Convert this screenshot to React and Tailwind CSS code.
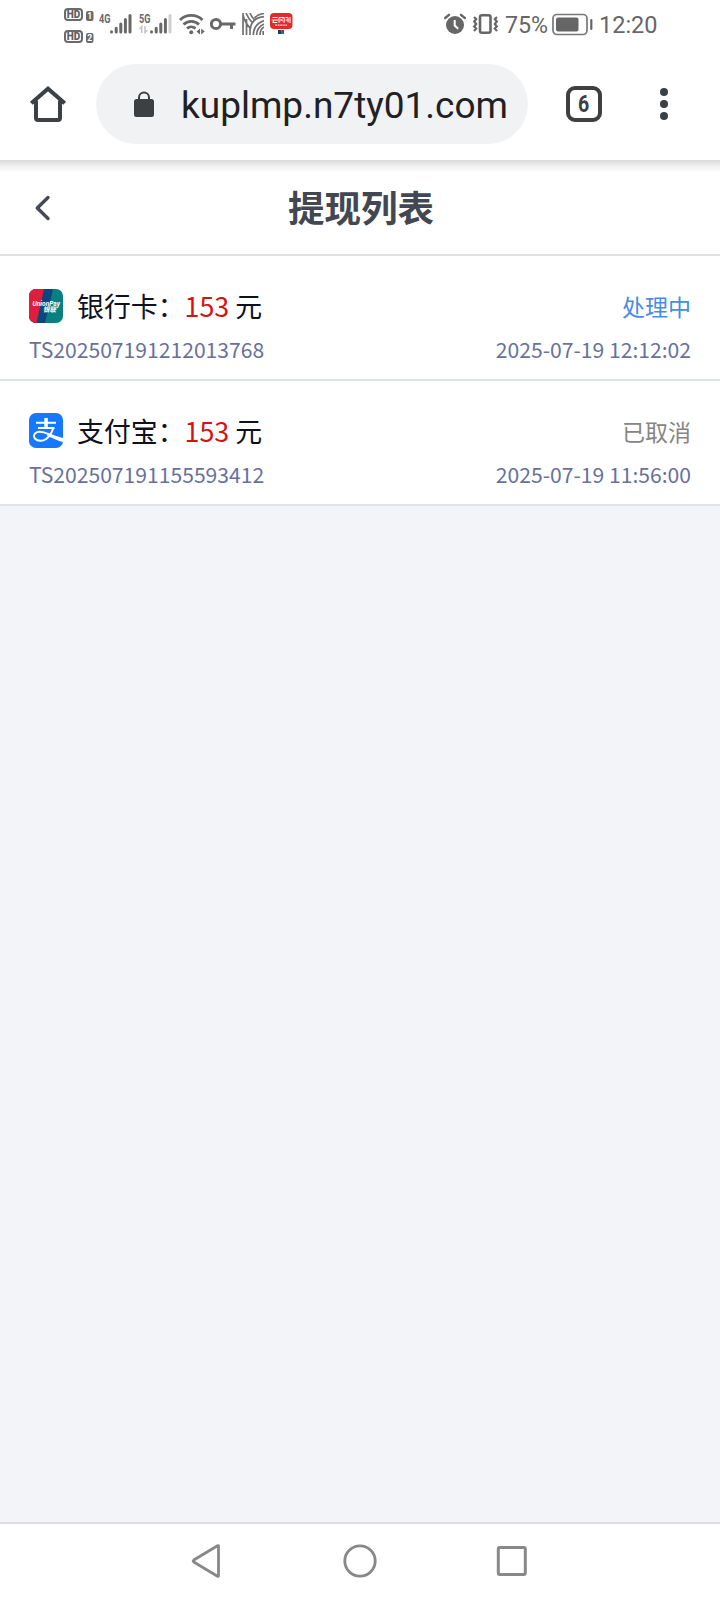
import React from "react";

const cjk = "font-['Noto_Sans_CJK_SC',sans-serif]";

function HdBadge({ n }) {
  return (
    <div className="flex h-[13px] items-end gap-[3px]">
      <svg className="block h-[13px] w-[19px]" viewBox="0 0 19 13" aria-hidden="true">
        <rect x="1" y="1" width="17" height="11" rx="3" fill="none" stroke="#6a6a6a" strokeWidth="2" />
        <text x="2.800" y="10.300" fontFamily="Roboto, sans-serif" fontSize="10.500" fontWeight="900" fill="#606060" textLength="13.500" lengthAdjust="spacingAndGlyphs">
          HD
        </text>
      </svg>
      <svg className="block h-[10px] w-[8px]" viewBox="0 0 8 10" aria-hidden="true">
        <rect x="0" y="0" width="7.500" height="10" rx="2" fill="#6a6a6a" />
        <text x="3.700" y="8" textAnchor="middle" fontFamily="Roboto, sans-serif" fontSize="8.500" fontWeight="700" fill="#fff">
          {n}
        </text>
      </svg>
    </div>
  );
}

function Signal({ label, weak }) {
  const c = "#686868";
  return (
    <svg className="block h-[24px] w-[33px]" viewBox="0 0 33 24" aria-hidden="true">
      <text x="0" y="12" fontFamily="Roboto, sans-serif" fontSize="12.500" fontWeight="700" fill={c} textLength="11.500" lengthAdjust="spacingAndGlyphs">
        {label}
      </text>
      {weak && (
        <path d="M.5 18l2.200-2.500V22M6 15v6.500L8.500 19" fill="none" stroke="#c4c4c4" strokeWidth="1.500" />
      )}
      <g strokeLinecap="round" strokeWidth="3" stroke={c}>
        <path d="M12.500 20.800v.2M17.200 17.200v3.800M21.800 13v8M26.400 8.500v12.500" />
        <path d="M31 4.500v16.500" stroke={weak ? "#cfcfcf" : c} />
      </g>
    </svg>
  );
}

function StatusBar() {
  return (
    <div className="flex h-[48px] shrink-0 justify-between pr-[63px] pl-[64px]">
      <div className="flex">
        <div className="flex flex-col gap-[9px] pt-[8px]">
          <HdBadge n="1" />
          <HdBadge n="2" />
        </div>
        <div className="flex gap-[7px] pt-[11px] pl-[5px]">
          <Signal label="4G" />
          <Signal label="5G" weak />
        </div>
        <svg className="mt-[12px] ml-[7px] block h-[24px] w-[26px]" viewBox="0 0 26 24" fill="none" stroke="#686868" strokeWidth="2.8" aria-hidden="true">
          <path d="M1 8a16 16 0 0 1 22.5 0" />
          <path d="M4.5 12.5a11 11 0 0 1 15.5 0" />
          <path d="M8 16.5a6.2 6.2 0 0 1 8.5 0" />
          <circle cx="12.2" cy="20.2" r="2" fill="#686868" stroke="none" />
          <path d="M21 16.5v6l-3.5-3zM22.2 16.5v6l3.5-3z" fill="#686868" stroke="none" />
        </svg>
        <svg className="mt-[16px] ml-[5px] block h-[16px] w-[26px]" viewBox="0 0 26 16" fill="none" stroke="#686868" strokeWidth="3" aria-hidden="true">
          <circle cx="6" cy="8" r="4.6" />
          <path d="M11 8h14.5M21.5 8v5" />
        </svg>
        <svg className="mt-[13px] ml-[6px] block h-[22px] w-[22px]" viewBox="0 0 22 22" fill="none" stroke="#707070" strokeWidth="1.700" aria-hidden="true">
          <path d="M1 0v22M4 0c2 5 4.500 8 7 10.500M4.500 6v16M1 2c1.500 6 4 10 7.500 13.500M8 0c1 3 3 5.500 5 7.500M8 14v8M11.300 22c0-7 4-12 10.700-14.500M8.300 16C9 9 14 4.500 22 3.700M14.600 22c0-5.500 3-9 7.400-11M18 22c0-4 1.500-6.500 4-8M21.200 22v-4M12.500 5C15 2.500 18 .8 22 .5" />
        </svg>
        <svg className="mt-[12px] ml-[6px] block h-[23px] w-[23px]" viewBox="0 0 23 23" aria-hidden="true">
          <rect x="0" y="1" width="22.500" height="16" rx="4" fill="#e12a2b" />
          <path d="M2.500 5.500h5M1.700 8h6.500M4 8L2.800 10.500h4.500M9 10.700V5.500h5.200v5.200M10 6.500l3 3M13 6.500l-3 3M15.500 5.500h2.500v5M15.500 8h3M20 5v6" fill="none" stroke="#fff" strokeWidth="1" />
          <path d="M5 13.200h12" stroke="#ffd9d9" strokeWidth="1.200" strokeDasharray="2 .6" />
          <path d="M8 18h3.500v4H8z" fill="#233a63" />
          <path d="M11.500 18H14v4h-2.500z" fill="#a02c48" />
          <path d="M11 20h3v2h-3z" fill="#23727a" />
        </svg>
      </div>
      <div className="flex font-['Roboto',sans-serif] text-[23.500px] leading-[28px] text-[#666]">
        <svg className="mt-[13px] block h-[22px] w-[22px]" viewBox="0 0 22 22" aria-hidden="true">
          <circle cx="11" cy="12" r="9" fill="#666" />
          <path d="M1.200 5L5 1.800M20.800 5L17 1.800" stroke="#666" strokeWidth="2.400" strokeLinecap="round" />
          <path d="M10.700 7v5.500l3.500 3.300" stroke="#fff" strokeWidth="2" fill="none" />
        </svg>
        <svg className="mt-[13px] ml-[6px] block h-[22px] w-[27px]" viewBox="0 0 27 22" fill="none" stroke="#666" aria-hidden="true">
          <rect x="8" y="2.200" width="10.500" height="17.600" rx="2" strokeWidth="2.600" />
          <path d="M2 4l2.200 2-2 2.500 2 2.500-2 2.500 2 2-2.200 2.500M25 4l-2.200 2 2 2.500-2 2.500 2 2.500-2 2 2.200 2.500" strokeWidth="2.200" />
        </svg>
        <span className="mt-[11px] ml-[6px] w-[43px] text-[23.200px] whitespace-nowrap">75%</span>
        <svg className="mt-[13px] ml-[4px] block h-[23px] w-[41px]" viewBox="0 0 41 23" aria-hidden="true">
          <rect x="1" y="1.500" width="34" height="20" rx="4" fill="none" stroke="#777" strokeWidth="1.700" />
          <rect x="4" y="4.500" width="22.500" height="14" rx="2" fill="#666" />
          <path d="M39.300 7v9" stroke="#666" strokeWidth="2.200" strokeLinecap="round" />
        </svg>
        <span className="mt-[11px] ml-[6px] w-[58px] whitespace-nowrap">12:20</span>
      </div>
    </div>
  );
}

function Toolbar() {
  return (
    <div className="relative z-10 -mx-[20px] flex h-[112px] shrink-0 items-start bg-white px-[20px] pt-[16px] shadow-[0_2px_12px_rgba(0,0,0,0.24)] [clip-path:inset(0_0_-20px_0)]">
      <svg className="mt-[20px] ml-[28px] block h-[40px] w-[40px]" viewBox="0 0 40 40" fill="none" stroke="#3c4043" strokeWidth="4" aria-hidden="true">
        <path d="M3.300 19.300L20 4.700l16.700 14.600" />
        <path d="M8 16.500V34q0 2 2 2h20q2 0 2-2V16.500" />
      </svg>
      <div className="ml-[28px] flex h-[80px] w-[432px] rounded-full bg-[#f1f2f4]">
        <svg className="mt-[27px] ml-[38px] block h-[26px] w-[20px]" viewBox="0 0 20 26" aria-hidden="true">
          <rect y="8" width="20" height="18" rx="2.500" fill="#3c4043" />
          <path d="M5 9V6.500a5 5 0 0 1 10 0V9" fill="none" stroke="#3c4043" strokeWidth="2" />
        </svg>
        <span className="ml-[27px] font-['Roboto',sans-serif] text-[37px] leading-[83px] whitespace-nowrap text-[#202124]">
          kuplmp.n7ty01.com
        </span>
      </div>
      <div className="mt-[22px] ml-[38px] flex h-[36px] w-[36px] items-center justify-center rounded-[9px] border-4 border-[#3f3f40] font-['Roboto',sans-serif] text-[23px] leading-none font-bold text-[#3c4043]">
        <span className="scale-x-[0.85]">6</span>
      </div>
      <div className="mt-[24px] ml-[58px] flex flex-col gap-[4px]">
        <span className="h-[8px] w-[8px] rounded-full bg-[#3c4043]" />
        <span className="h-[8px] w-[8px] rounded-full bg-[#3c4043]" />
        <span className="h-[8px] w-[8px] rounded-full bg-[#3c4043]" />
      </div>
    </div>
  );
}

function UnionPayIcon() {
  return (
    <svg className="block h-[34px] w-[34px] rounded-[7px]" viewBox="0 0 34 34" aria-hidden="true">
      <rect width="34" height="34" fill="#0a7f80" />
      <path d="M0 0h24l-8 34H0z" fill="#0b467f" />
      <path d="M0 0h15L7.500 34H0z" fill="#df1d3c" />
      <text x="3.500" y="17.300" fontFamily="Roboto, sans-serif" fontSize="6.500" fontWeight="700" fontStyle="italic" fill="#fff" textLength="27.500" lengthAdjust="spacingAndGlyphs">
        UnionPay
      </text>
      <text x="15" y="23.300" fontFamily="'Noto Sans CJK SC', sans-serif" fontSize="6.800" fontWeight="700" fill="#fff" transform="skewX(-12) translate(4 0)" textLength="13" lengthAdjust="spacingAndGlyphs">
        银联
      </text>
    </svg>
  );
}

function AlipayIcon() {
  return (
    <svg className="-mt-[2px] block h-[35px] w-[34px] rounded-[7px]" viewBox="0 0 34 35" fill="none" stroke="#fff" aria-hidden="true">
      <rect width="34" height="35" fill="#1677ff" stroke="none" />
      <path d="M7 9.700h20M9 15h16.500" strokeWidth="2" />
      <path d="M15.300 5h3.500v9.500h-3.500z" fill="#fff" stroke="none" />
      <path d="M24.300 15c-1.600 5-4 8.500-7.200 11-3.500 2.500-8.500 2.300-11-.2-2-2.200-1.300-5.600 2-6.700 3.500-1 8 .4 12 2.200" strokeWidth="2" />
      <path d="M19 19.800c5 2.200 10 3.900 15 5.100v4.200c-5-1.500-11-4-16-6.700z" fill="#fff" stroke="none" />
    </svg>
  );
}

function Row({ icon, name, amount, status, statusClass, id, time, last }) {
  return (
    <div className={`h-[125px] border-b-2 bg-white px-[29px] pt-[30px] ${last ? "border-[#e0e2ee]" : "border-[#e0e4e4]"}`}>
      <div className="flex h-[40px] items-center justify-between">
        <div className="flex items-center">
          {icon}
          <span className="ml-[14px] text-[26.880px] leading-[40px] whitespace-pre text-[#0f1020]">
            {name}：<span className="text-[#d41414]">{amount}</span> 元
          </span>
        </div>
        <span className={`text-[23.040px] leading-[38px] ${statusClass}`}>{status}</span>
      </div>
      <div className="flex h-[46px] items-center justify-between text-[21.120px] leading-[46px] text-[#68719c]">
        <span>{id}</span>
        <span>{time}</span>
      </div>
    </div>
  );
}

export default function App() {
  return (
    <div className={`flex h-[1600px] w-[720px] flex-col overflow-hidden bg-white ${cjk}`}>
      <StatusBar />
      <Toolbar />
      <header className="flex h-[96px] shrink-0 items-center border-b-2 border-[#e0e0e0] bg-white pl-[34px]">
        <svg className="mt-[1px] block h-[26px] w-[18px]" viewBox="0 0 18 26" fill="none" stroke="#454955" strokeWidth="3.400" strokeLinecap="round" strokeLinejoin="round" aria-hidden="true">
          <path d="M14 2.500L3.300 13l10.700 10.500" />
        </svg>
        <h1 className="mr-[50px] flex-1 text-center text-[36.500px] leading-[54px] font-bold text-[#434752]">提现列表</h1>
      </header>
      <main className="flex-1 bg-[#f2f4f9]">
        <Row
          icon={<UnionPayIcon />}
          name="银行卡"
          amount="153"
          status="处理中"
          statusClass="text-[#4a8be6]"
          id="TS202507191212013768"
          time="2025-07-19 12:12:02"
        />
        <Row
          icon={<AlipayIcon />}
          name="支付宝"
          amount="153"
          status="已取消"
          statusClass="text-[#858585]"
          id="TS202507191155593412"
          time="2025-07-19 11:56:00"
          last
        />
      </main>
      <nav className="flex h-[78px] shrink-0 items-start border-t-2 border-[#dcdce1] bg-white pt-[18px] pl-[190px]">
        <svg className="block h-[38px] w-[32px]" viewBox="0 0 32 38" fill="none" stroke="#888" strokeWidth="2.800" strokeLinejoin="round" aria-hidden="true">
          <path d="M28.500 4.200v29.600q0 1-1 .5L3.800 20q-1.300-1 0-2L27.500 3.700q1-.5 1 .5z" />
        </svg>
        <svg className="ml-[119px] block h-[38px] w-[38px]" viewBox="0 0 38 38" fill="none" stroke="#888" strokeWidth="2.800" aria-hidden="true">
          <circle cx="19" cy="19" r="15.200" />
        </svg>
        <svg className="ml-[114px] block h-[38px] w-[38px]" viewBox="0 0 38 38" fill="none" stroke="#888" strokeWidth="3" aria-hidden="true">
          <rect x="5.300" y="5.500" width="27" height="27" rx="1.500" />
        </svg>
      </nav>
    </div>
  );
}
